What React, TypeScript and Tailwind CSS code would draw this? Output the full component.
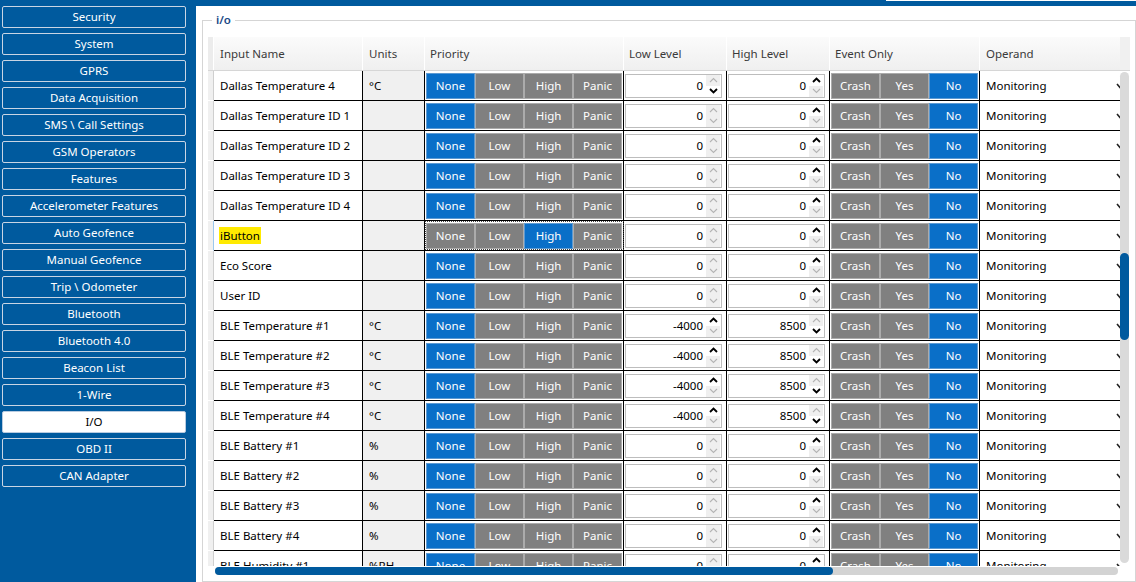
import React from 'react';

const navItems = [
  'Security',
  'System',
  'GPRS',
  'Data Acquisition',
  'SMS \\ Call Settings',
  'GSM Operators',
  'Features',
  'Accelerometer Features',
  'Auto Geofence',
  'Manual Geofence',
  'Trip \\ Odometer',
  'Bluetooth',
  'Bluetooth 4.0',
  'Beacon List',
  '1-Wire',
  'I/O',
  'OBD II',
  'CAN Adapter',
];

type Spin = { value: string; up: boolean; down: boolean };

interface Row {
  name: string;
  unit: string;
  priority: number;
  low: Spin;
  high: Spin;
  highlight?: boolean;
  focus?: boolean;
}

const zeroLow: Spin = { value: '0', up: false, down: false };
const zeroHigh: Spin = { value: '0', up: true, down: false };
const bleLow: Spin = { value: '-4000', up: true, down: false };
const bleHigh: Spin = { value: '8500', up: false, down: true };

const rows: Row[] = [
  { name: 'Dallas Temperature 4', unit: '°C', priority: 0, low: { value: '0', up: false, down: true }, high: zeroHigh },
  { name: 'Dallas Temperature ID 1', unit: '', priority: 0, low: zeroLow, high: zeroHigh },
  { name: 'Dallas Temperature ID 2', unit: '', priority: 0, low: zeroLow, high: zeroHigh },
  { name: 'Dallas Temperature ID 3', unit: '', priority: 0, low: zeroLow, high: zeroHigh },
  { name: 'Dallas Temperature ID 4', unit: '', priority: 0, low: zeroLow, high: zeroHigh },
  { name: 'iButton', unit: '', priority: 2, low: zeroLow, high: zeroHigh, highlight: true, focus: true },
  { name: 'Eco Score', unit: '', priority: 0, low: zeroLow, high: zeroHigh },
  { name: 'User ID', unit: '', priority: 0, low: zeroLow, high: zeroHigh },
  { name: 'BLE Temperature #1', unit: '°C', priority: 0, low: bleLow, high: bleHigh },
  { name: 'BLE Temperature #2', unit: '°C', priority: 0, low: bleLow, high: bleHigh },
  { name: 'BLE Temperature #3', unit: '°C', priority: 0, low: bleLow, high: bleHigh },
  { name: 'BLE Temperature #4', unit: '°C', priority: 0, low: bleLow, high: bleHigh },
  { name: 'BLE Battery #1', unit: '%', priority: 0, low: zeroLow, high: zeroHigh },
  { name: 'BLE Battery #2', unit: '%', priority: 0, low: zeroLow, high: zeroHigh },
  { name: 'BLE Battery #3', unit: '%', priority: 0, low: zeroLow, high: zeroHigh },
  { name: 'BLE Battery #4', unit: '%', priority: 0, low: zeroLow, high: zeroHigh },
  { name: 'BLE Humidity #1', unit: '%RH', priority: 0, low: zeroLow, high: zeroHigh },
];

const Chevron: React.FC<{ dir: 'up' | 'down'; active: boolean }> = ({ dir, active }) => (
  <svg width="9" height="6" viewBox="0 0 9 6">
    <path
      d={dir === 'up' ? 'M1 5 L4.5 1.5 L8 5' : 'M1 1 L4.5 4.5 L8 1'}
      fill="none"
      stroke={active ? '#000' : '#b4b4b4'}
      strokeWidth={active ? 1.9 : 1.1}
    />
  </svg>
);

const SpinBox: React.FC<{ spin: Spin }> = ({ spin }) => (
  <div className="w-[103px] h-full border-r border-black flex items-center pl-px">
    <div className="w-[97px] h-[24px] border border-[#bdbdbd] bg-white flex items-center justify-end">
      <span className="pr-[3px] text-black">{spin.value}</span>
      <div className="w-[14px] h-[22px] mr-px flex flex-col">
        <div className={`h-[11px] flex items-center justify-center ${spin.up ? '' : 'bg-[#efefef]'}`}>
          <Chevron dir="up" active={spin.up} />
        </div>
        <div className={`h-[11px] flex items-center justify-center ${spin.down ? '' : 'bg-[#efefef]'}`}>
          <Chevron dir="down" active={spin.down} />
        </div>
      </div>
    </div>
  </div>
);

const SegButton: React.FC<{ label: string; on: boolean }> = ({ label, on }) => (
  <div
    className={`w-[49px] h-[26px] border flex items-center justify-center text-white pt-px ${
      on ? 'bg-[#0a6fc8] border-[#5c9ad3]' : 'bg-[#808080] border-[#ababab]'
    }`}
  >
    {label}
  </div>
);

const App: React.FC = () => {
  return (
    <div className="w-[1136px] h-[582px] overflow-hidden bg-[#005a9e] flex font-['Noto_Sans',sans-serif] text-[11.5px]">
      <nav className="w-[196px] shrink-0 pl-[2px] pr-[10px] pt-[6px] flex flex-col gap-[5px]">
        {navItems.map(item => (
          <div
            key={item}
            className={`h-[22px] border rounded-[2px] flex items-center justify-center ${
              item === 'I/O' ? 'bg-white text-black border-[#b8cbe0]' : 'text-white border-[#c9d5e4]'
            }`}
          >
            {item}
          </div>
        ))}
      </nav>

      <div className="flex-1 flex flex-col">
        <div className="h-[6px] flex justify-end">
          <div className="w-[250px] h-px bg-white" />
        </div>
        <div className="flex-1 bg-white pl-[6px]">
          <fieldset className="mt-[7px] h-[569px] border border-[#d5d5d5] pl-[5px] pr-[5px] pt-[10px]">
            <legend className="ml-[4px] px-[4px] leading-[14px] font-semibold text-[#1b4a86]">i/o</legend>

            <div className="w-[922px] h-[539px] flex flex-col">
              {/* header */}
              <div className="h-[34px] flex border-b border-[#d6d6d6] bg-gradient-to-b from-[#fbfbfb] to-[#efefef] text-[#3a3a3a]">
                <div className="w-[6px] bg-[#ececec] border-r border-white" />
                <div className="w-[149px] border-r border-white pl-[6px] flex items-center">Input Name</div>
                <div className="w-[62px] border-r border-white pl-[6px] flex items-center">Units</div>
                <div className="w-[199px] border-r border-white pl-[5px] flex items-center">Priority</div>
                <div className="w-[103px] border-r border-white pl-[5px] flex items-center">Low Level</div>
                <div className="w-[103px] border-r border-white pl-[5px] flex items-center">High Level</div>
                <div className="w-[150px] border-r border-white pl-[5px] flex items-center">Event Only</div>
                <div className="w-[140px] pl-[6px] flex items-center">Operand</div>
                <div className="w-[10px] bg-[#f0f0f0]" />
              </div>

              {/* body */}
              <div className="h-[495px] flex">
                <div className="w-[912px] h-full overflow-hidden flex flex-col">
                  {rows.map(row => (
                    <div key={row.name} className="h-[30px] shrink-0 flex">
                      <div
                        className={`w-[6px] bg-[#f0f0f0] border-b border-white border-r ${
                          row.focus ? 'border-r-[#9cc8ee]' : 'border-r-[#cfcfcf]'
                        }`}
                      />
                      <div className="flex flex-1 border-b border-black">
                        <div className="w-[149px] border-r border-black bg-white pl-[5px] flex items-center text-black">
                          <span className={row.highlight ? 'bg-[#ffea00] px-px' : 'px-px'}>{row.name}</span>
                        </div>
                        <div className="w-[62px] border-r border-black bg-[#f0f0f0] pl-[6px] flex items-center text-black">
                          {row.unit}
                        </div>
                        <div
                          className={`w-[199px] border-r border-black flex items-center pl-px ${
                            row.focus ? 'outline-1 outline-dotted outline-[#444] -outline-offset-1' : ''
                          }`}
                        >
                          {['None', 'Low', 'High', 'Panic'].map((p, i) => (
                            <SegButton key={p} label={p} on={i === row.priority} />
                          ))}
                        </div>
                        <SpinBox spin={row.low} />
                        <SpinBox spin={row.high} />
                        <div className="w-[150px] border-r border-black flex items-center pl-px">
                          <SegButton label="Crash" on={false} />
                          <SegButton label="Yes" on={false} />
                          <SegButton label="No" on={true} />
                        </div>
                        <div className="w-[140px] bg-white pl-[6px] flex items-center justify-between overflow-hidden text-black">
                          <span>Monitoring</span>
                          <svg width="8" height="6" viewBox="0 0 8 6" className="-mr-[4px]">
                            <path d="M1 1 L4 4.5 L7 1" fill="none" stroke="#222" strokeWidth="1.6" />
                          </svg>
                        </div>
                      </div>
                    </div>
                  ))}
                </div>

                {/* vertical scrollbar */}
                <div className="w-[10px] h-full pt-px">
                  <div className="w-[9px] h-[491px] rounded-full bg-[#dadada] pt-[181px]">
                    <div className="h-[87px] rounded-full bg-[#005a9e]" />
                  </div>
                </div>
              </div>

              {/* horizontal scrollbar */}
              <div className="h-[10px] flex items-center pl-[7px]">
                <div className="w-[903px] h-[8px] rounded-full bg-[#d3d3d3]">
                  <div className="w-[618px] h-full rounded-full bg-[#005a9e]" />
                </div>
              </div>
            </div>
          </fieldset>
        </div>
      </div>
    </div>
  );
};

export default App;
